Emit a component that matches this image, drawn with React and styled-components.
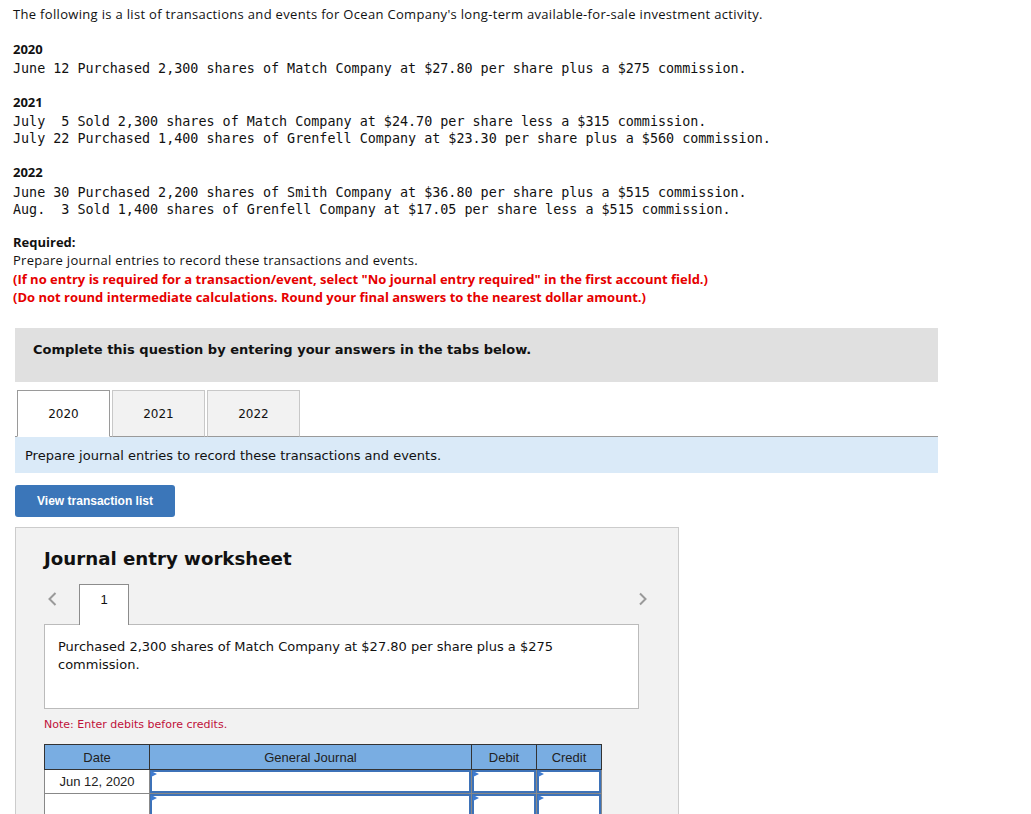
import React, { useState } from 'react';
import styled, { createGlobalStyle } from 'styled-components';

const YEARS = [
  {
    year: '2020',
    gap: 19,
    pad: 2,
    lines: ['June 12 Purchased 2,300 shares of Match Company at $27.80 per share plus a $275 commission.'],
  },
  {
    year: '2021',
    gap: 17,
    pad: 2,
    lines: [
      'July  5 Sold 2,300 shares of Match Company at $24.70 per share less a $315 commission.',
      'July 22 Purchased 1,400 shares of Grenfell Company at $23.30 per share plus a $560 commission.',
    ],
  },
  {
    year: '2022',
    gap: 17,
    pad: 3,
    lines: [
      'June 30 Purchased 2,200 shares of Smith Company at $36.80 per share plus a $515 commission.',
      'Aug.  3 Sold 1,400 shares of Grenfell Company at $17.05 per share less a $515 commission.',
    ],
  },
];

const ROWS = [{ date: 'Jun 12, 2020' }, { date: '' }, { date: '' }];

export default function App() {
  const [tab, setTab] = useState('2020');

  return (
    <Page>
      <GlobalStyle />
      <Intro>
        <Lead>
          The following is a list of transactions and events for Ocean Company's long-term
          available-for-sale investment activity.
        </Lead>
        {YEARS.map((y) => (
          <YearBlock key={y.year} gap={y.gap}>
            <YearTitle pad={y.pad}>{y.year}</YearTitle>
            {y.lines.map((line) => (
              <Mono key={line}>{line}</Mono>
            ))}
          </YearBlock>
        ))}
        <Required>
          <strong>Required:</strong>
          <Plain>Prepare journal entries to record these transactions and events.</Plain>
          <Warnings>
            <div>
              (If no entry is required for a transaction/event, select "No journal entry required"
              in the first account field.)
            </div>
            <div>
              (Do not round intermediate calculations. Round your final answers to the nearest
              dollar amount.)
            </div>
          </Warnings>
        </Required>
      </Intro>

      <Question>
        <Banner>Complete this question by entering your answers in the tabs below.</Banner>
        <Tabs>
          {['2020', '2021', '2022'].map((t) => (
            <Tab key={t} active={t === tab} onClick={() => setTab(t)}>
              {t}
            </Tab>
          ))}
        </Tabs>
        <InfoBar>Prepare journal entries to record these transactions and events.</InfoBar>
        <ListButton>View transaction list</ListButton>

        <Worksheet>
          <WorksheetTitle>Journal entry worksheet</WorksheetTitle>
          <NavRow>
            <Arrow>
              <svg width="9" height="14" viewBox="0 0 9 14">
                <polyline points="7.5,1 1.5,7 7.5,13" fill="none" stroke="#9a9a9a" strokeWidth="2" />
              </svg>
            </Arrow>
            <EntryTab>1</EntryTab>
            <Arrow right>
              <svg width="8" height="14" viewBox="0 0 8 14">
                <polyline points="1,1.5 6.5,7 1,12.5" fill="none" stroke="#9a9a9a" strokeWidth="2" />
              </svg>
            </Arrow>
          </NavRow>
          <EntryBox>
            Purchased 2,300 shares of Match Company at $27.80 per share plus a $275 commission.
          </EntryBox>
          <Note>Note: Enter debits before credits.</Note>
          <Journal>
            <colgroup>
              <col style={{ width: 105 }} />
              <col style={{ width: 322 }} />
              <col style={{ width: 65 }} />
              <col style={{ width: 65 }} />
            </colgroup>
            <thead>
              <tr>
                <Head>Date</Head>
                <Head>General Journal</Head>
                <Head>Debit</Head>
                <Head>Credit</Head>
              </tr>
            </thead>
            <tbody>
              {ROWS.map((r, i) => (
                <tr key={i}>
                  <DateCell>{r.date}</DateCell>
                  <InputCell>
                    <Field />
                  </InputCell>
                  <InputCell>
                    <Field />
                  </InputCell>
                  <InputCell>
                    <Field />
                  </InputCell>
                </tr>
              ))}
            </tbody>
          </Journal>
        </Worksheet>
      </Question>
    </Page>
  );
}

const GlobalStyle = createGlobalStyle`
  body {
    margin: 0;
    background: #fff;
    color: #111;
  }
`;

const Page = styled.div`
  padding: 6px 0 40px;
`;

const Intro = styled.div`
  padding: 0 13px;
  font-family: 'Open Sans', Lato, sans-serif;
  font-size: 13px;
  color: #111;
`;

const Lead = styled.div`
  line-height: 16px;
  letter-spacing: 0.32px;
`;

const YearBlock = styled.div`
  margin-top: ${(p) => p.gap}px;
`;

const YearTitle = styled.div`
  font-weight: 700;
  line-height: 17px;
  margin-bottom: ${(p) => p.pad}px;
`;

const Mono = styled.div`
  font-family: 'DejaVu Sans Mono', 'Liberation Mono', monospace;
  font-size: 13.4px;
  line-height: 17px;
  white-space: pre;
  color: #111;
`;

const Required = styled.div`
  margin-top: 15px;
  line-height: 18px;
  strong {
    font-weight: 700;
  }
`;

const Plain = styled.div`
  letter-spacing: 0.28px;
`;

const Warnings = styled.div`
  margin-top: 1px;
  color: #e60000;
  font-weight: 700;
`;

const Question = styled.div`
  margin-top: 22px;
  padding-left: 15px;
  width: 923px;
  font-family: 'DejaVu Sans', Verdana, sans-serif;
`;

const Banner = styled.div`
  background: #e0e0e0;
  padding: 14px 18px 24px;
  font-size: 13px;
  line-height: 16px;
  font-weight: 700;
  color: #111;
`;

const Tabs = styled.div`
  display: flex;
  gap: 2px;
  margin-top: 8px;
  padding-left: 2px;
  border-bottom: 1px solid #9a9a9a;
`;

const Tab = styled.button`
  width: 93px;
  height: 47px;
  margin-bottom: -1px;
  border: 1px solid ${(p) => (p.active ? '#9a9a9a' : '#c8c8c8')};
  border-bottom: ${(p) => (p.active ? '1px solid #fff' : '1px solid #9a9a9a')};
  background: ${(p) => (p.active ? '#fff' : '#f2f2f2')};
  font-family: 'DejaVu Sans', Verdana, sans-serif;
  font-size: 12px;
  color: #111;
  padding: 0;
  cursor: pointer;
`;

const InfoBar = styled.div`
  background: #daeaf8;
  height: 36px;
  display: flex;
  align-items: center;
  padding-left: 10px;
  font-size: 13px;
  color: #111;
`;

const ListButton = styled.button`
  display: block;
  margin-top: 12px;
  width: 160px;
  height: 32px;
  border: none;
  border-radius: 3px;
  background: #3b76b9;
  color: #fff;
  font-family: 'Liberation Sans', Arial, sans-serif;
  font-size: 12px;
  font-weight: 700;
  cursor: pointer;
`;

const Worksheet = styled.div`
  margin-top: 10px;
  width: 664px;
  box-sizing: border-box;
  background: #f2f2f2;
  border: 1px solid #ccc;
  padding: 20px 39px 0 28px;
`;

const WorksheetTitle = styled.div`
  font-size: 18.2px;
  line-height: 22px;
  font-weight: 700;
  color: #111;
`;

const NavRow = styled.div`
  display: flex;
  align-items: flex-end;
  margin-top: 14px;
  margin-right: -8px;
  height: 40px;
`;

const Arrow = styled.div`
  height: 40px;
  box-sizing: border-box;
  display: flex;
  align-items: flex-start;
  padding: ${(p) => (p.right ? '8px 0 0' : '8px 0 0 4px')};
  width: ${(p) => (p.right ? 'auto' : '35px')};
  margin-left: ${(p) => (p.right ? 'auto' : '0')};
  svg {
    display: block;
  }
`;

const EntryTab = styled.div`
  width: 50px;
  height: 41px;
  box-sizing: border-box;
  border: 1px solid #8c8c8c;
  border-bottom: none;
  background: #fff;
  margin-bottom: -1px;
  position: relative;
  z-index: 1;
  display: flex;
  justify-content: center;
  padding-top: 7px;
  font-family: 'Liberation Sans', Arial, sans-serif;
  font-size: 13px;
  color: #111;
`;

const EntryBox = styled.div`
  background: #fff;
  border: 1px solid #bbb;
  height: 85px;
  box-sizing: border-box;
  padding: 13px 80px 0 13px;
  font-size: 13px;
  line-height: 18px;
  color: #111;
`;

const Note = styled.div`
  margin-top: 9px;
  font-size: 11px;
  line-height: 14px;
  color: #c0103a;
`;

const Journal = styled.table`
  margin-top: 12px;
  border-collapse: collapse;
  table-layout: fixed;
  width: 557px;
  font-family: 'Liberation Sans', Arial, sans-serif;
  font-size: 13px;
  color: #222;
`;

const Head = styled.th`
  background: #79ade2;
  height: 24px;
  padding: 0;
  border: 1px solid #333;
  font-weight: 400;
  color: #222;
`;

const DateCell = styled.td`
  height: 22px;
  padding: 0;
  text-align: center;
  border: 1px solid #888;
  background: #fff;
`;

const InputCell = styled.td`
  padding: 0;
  border: 1px solid #888;
  background: #fff;
`;

const Field = styled.div`
  position: relative;
  height: 23px;
  box-sizing: border-box;
  border: 2px solid #3d72b8;
  &::before {
    content: '';
    position: absolute;
    left: -1px;
    top: -1px;
    border-top: 3px solid transparent;
    border-bottom: 3px solid transparent;
    border-left: 6px solid #3f7bd0;
  }
`;
